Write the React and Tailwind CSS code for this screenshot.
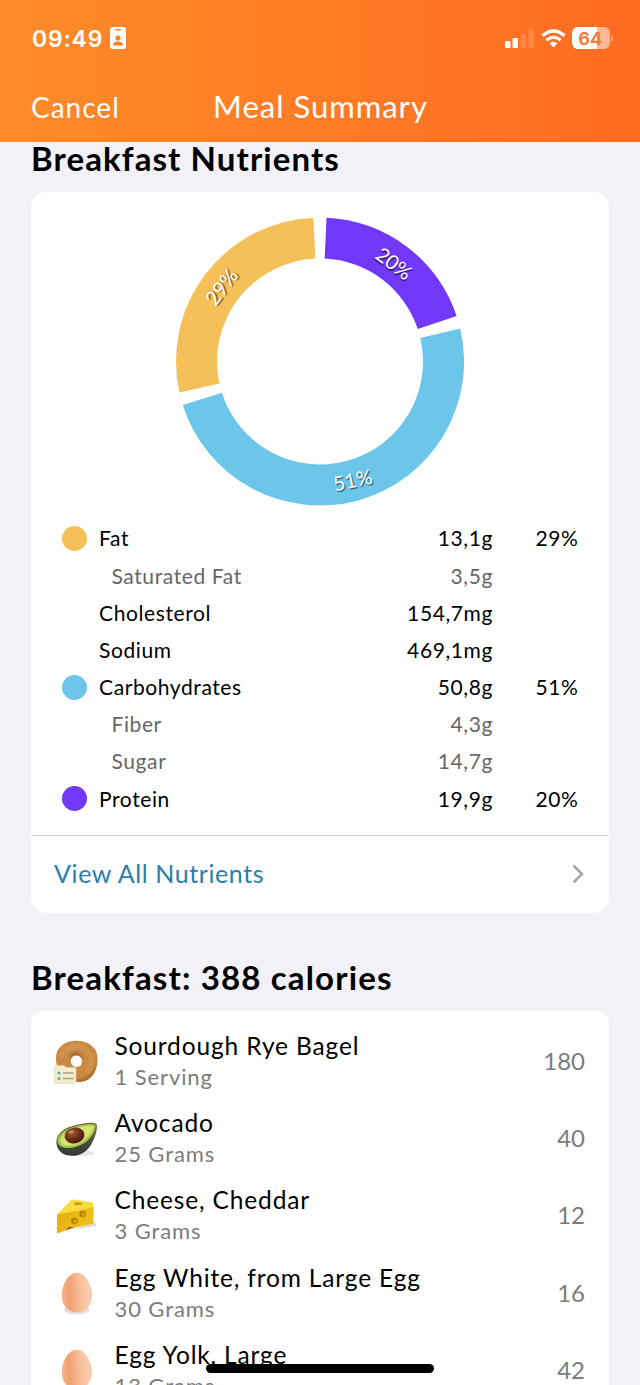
import React from "react";

const nutrients = [
  { name: "Fat", amount: "13,1g", percent: "29%", dot: "bg-[#f5c057]" },
  { name: "Saturated Fat", amount: "3,5g", sub: true },
  { name: "Cholesterol", amount: "154,7mg" },
  { name: "Sodium", amount: "469,1mg" },
  { name: "Carbohydrates", amount: "50,8g", percent: "51%", dot: "bg-[#6bc6ea]" },
  { name: "Fiber", amount: "4,3g", sub: true },
  { name: "Sugar", amount: "14,7g", sub: true },
  { name: "Protein", amount: "19,9g", percent: "20%", dot: "bg-[#7138f8]" },
];

// angles are degrees clockwise from the top
const slices = [
  { start: 2.6, end: 71.6, color: "#7138f8", label: "20%", x: 218.5, y: 71, rotate: 37 },
  { start: 76.8, end: 252.4, color: "#6bc6ea", label: "51%", x: 176.5, y: 287.5, rotate: -12 },
  { start: 257.6, end: 357.4, color: "#f5c057", label: "29%", x: 45, y: 94.5, rotate: -53 },
];

const point = (radius, angle) => {
  const a = ((angle - 90) * Math.PI) / 180;
  return `${(144 + radius * Math.cos(a)).toFixed(2)} ${(169.5 + radius * Math.sin(a)).toFixed(2)}`;
};

const slicePath = ({ start, end }) => {
  const large = end - start > 180 ? 1 : 0;
  return `M${point(144, start)} A144 144 0 ${large} 1 ${point(144, end)} L${point(103, end)} A103 103 0 ${large} 0 ${point(103, start)} Z`;
};

const DonutChart = () => (
  <svg className="mx-auto block" width="288" height="328" viewBox="0 0 288 328">
    {slices.map((slice) => (
      <path key={slice.label} d={slicePath(slice)} fill={slice.color} />
    ))}
    {slices.map((slice) => (
      <text
        key={slice.label}
        transform={`translate(${slice.x} ${slice.y}) rotate(${slice.rotate})`}
        textAnchor="middle"
        dominantBaseline="central"
        fill="#fff"
        className="text-[20px] [text-shadow:1px_1.5px_1px_rgba(0,0,0,0.55)]"
      >
        {slice.label}
      </text>
    ))}
  </svg>
);

const BagelIcon = () => (
  <svg width="44" height="44" viewBox="0 0 44 44">
    <defs>
      <radialGradient id="bagel" cx="0.48" cy="0.42" r="0.62">
        <stop offset="0.15" stopColor="#a8682f" />
        <stop offset="0.32" stopColor="#c98a45" />
        <stop offset="0.75" stopColor="#cb8a42" />
        <stop offset="1" stopColor="#a05d22" />
      </radialGradient>
    </defs>
    <path
      fillRule="evenodd"
      fill="url(#bagel)"
      d="M21 .8C31 .2 43 5 43.500 18C44 30 38 42.500 24 42C10 41.500 2 31 2 18C2 8 10 1.200 21 .8ZM22.500 15.500C18.500 15.500 16.500 18.500 16.800 21.500C17.200 25 19.500 27 23 27C26.500 27 28.300 24 28 20.500C27.700 17.500 25.500 15.500 22.500 15.500Z"
    />
    <path d="M8 14C12 7 21 5 29 7" fill="none" stroke="#dda460" strokeWidth="6" strokeLinecap="round" opacity="0.35" />
    <path d="M34 12C38.500 17 38 24 34 31" fill="none" stroke="#dda460" strokeWidth="5" strokeLinecap="round" opacity="0.3" />
    <path d="M.5 26.500Q.5 25.500 1.500 25.500H10L12 27.500H21Q22 27.500 22 28.500V42.500Q22 43.500 21 43.500H1.500Q.5 43.500 .5 42.500Z" fill="#f4eccb" stroke="#e0d5a8" strokeWidth="0.600" />
    <circle cx="5" cy="33" r="1.600" fill="#55b8a8" />
    <circle cx="5" cy="38.500" r="1.600" fill="#55b8a8" />
    <path d="M9 33H19.500M9 38.500H19.500" stroke="#a8a383" strokeWidth="1.300" />
  </svg>
);

const AvocadoIcon = () => (
  <svg width="44" height="44" viewBox="0 0 44 44">
    <defs>
      <radialGradient id="pit" cx="0.4" cy="0.3" r="0.7">
        <stop offset="0" stopColor="#a05a35" />
        <stop offset="0.6" stopColor="#6b2e18" />
        <stop offset="1" stopColor="#43190c" />
      </radialGradient>
      <linearGradient id="skin" x1="0" y1="0" x2="0" y2="1">
        <stop offset="0.3" stopColor="#5b6b2c" />
        <stop offset="0.65" stopColor="#44483a" />
        <stop offset="1" stopColor="#34362f" />
      </linearGradient>
    </defs>
    <ellipse cx="27" cy="36" rx="14" ry="3" fill="#dcdcdc" opacity="0.7" />
    <path d="M2.500 24C3 15 13 10 22 8C30 6.200 39 4.500 42.500 7C44 12 41 20 37.500 27C32 37.500 21 40.500 12 38C5 35.500 2 30 2.500 24Z" fill="url(#skin)" />
    <path d="M3.500 22.500C5 15.500 14 11 22 9.200C30 7.400 38 6 41.500 8C42 14 37 21 31 25.500C24 30.500 14 32.500 8 30C4.500 28.500 3 26 3.500 22.500Z" fill="#a9c94d" />
    <path d="M6.500 22.500C8 17 15 13 22 11.200C29 9.400 36 8 39.500 9.500C39 14.500 34 20 29 23.500C22 28 14 30 10 28C7 26.500 6 24.500 6.500 22.500Z" fill="#d9e279" />
    <ellipse cx="20.500" cy="18.500" rx="10" ry="7.800" transform="rotate(-10 20.500 18.500)" fill="url(#pit)" />
    <ellipse cx="17.500" cy="15" rx="3" ry="1.500" transform="rotate(-20 17.500 15)" fill="#d39a7a" opacity="0.7" />
  </svg>
);

const CheeseIcon = () => (
  <svg width="44" height="44" viewBox="0 0 44 44">
    <defs>
      <linearGradient id="rind" x1="0" y1="0" x2="1" y2="0.400">
        <stop offset="0" stopColor="#e6ad0b" />
        <stop offset="1" stopColor="#efc11c" />
      </linearGradient>
    </defs>
    <path d="M20 36L43 31.500L40 28L28 33Z" fill="#cfcfcf" opacity="0.8" />
    <path d="M3 20.500L16.500 6.800Q18 5.500 20 5.600L38.500 8.500L40 14.500L3 21Z" fill="#f8dc3f" />
    <path d="M3 20.500L39.500 13.500V29.500L20.500 34Q16 29.500 12.500 36L3.500 39.500Q2.800 39.700 2.800 38.500Z" fill="url(#rind)" />
    <ellipse cx="24" cy="9.700" rx="4" ry="1.400" fill="#c79716" />
    <circle cx="28.800" cy="20" r="3.300" fill="#b17a09" />
    <circle cx="29.500" cy="20.500" r="2.200" fill="#d69f12" />
    <circle cx="20.500" cy="27" r="3.300" fill="#b17a09" />
    <circle cx="21.200" cy="27.500" r="2.200" fill="#d69f12" />
    <path d="M12 37Q13 33 16 32.500Q19 32.500 20 34.500Q16 33.500 12 37Z" fill="#94630a" />
  </svg>
);

const EggIcon = () => (
  <svg width="44" height="44" viewBox="0 0 44 44">
    <defs>
      <linearGradient id="egg" x1="0" y1="0.55" x2="1" y2="0.45">
        <stop offset="0" stopColor="#f3b48c" />
        <stop offset="0.25" stopColor="#f0a070" />
        <stop offset="0.6" stopColor="#f8bd98" />
        <stop offset="0.9" stopColor="#fbceb2" />
        <stop offset="1" stopColor="#f4ba96" />
      </linearGradient>
    </defs>
    <ellipse cx="22.800" cy="38" rx="12.500" ry="4.500" fill="#e6dcd5" />
    <path d="M22.800 .8C31.500 .8 37.800 13 37.800 23.500C37.800 34 31.500 40 22.800 40C14 40 7.800 34 7.800 23.500C7.800 13 14 .8 22.800 .8Z" fill="url(#egg)" />
  </svg>
);

const foods = [
  { name: "Sourdough Rye Bagel", serving: "1 Serving", calories: 180, Icon: BagelIcon },
  { name: "Avocado", serving: "25 Grams", calories: 40, Icon: AvocadoIcon },
  { name: "Cheese, Cheddar", serving: "3 Grams", calories: 12, Icon: CheeseIcon },
  { name: "Egg White, from Large Egg", serving: "30 Grams", calories: 16, Icon: EggIcon },
  { name: "Egg Yolk, Large", serving: "13 Grams", calories: 42, Icon: EggIcon },
];

const StatusBar = () => (
  <div className="flex h-[76px] items-center pl-8 pr-[27px] text-white">
    <span className="pt-[2px] font-['Inter',sans-serif] text-[23px] font-semibold tracking-[0.800px]">09:49</span>
    <svg className="ml-[7px]" width="16" height="22" viewBox="0 0 16 22">
      <rect width="16" height="22" rx="2.500" fill="#fff" />
      <rect x="5" y="2" width="6" height="1.500" rx="0.700" fill="#fc8427" />
      <circle cx="8" cy="11" r="2.600" fill="#fc8427" />
      <path d="M3 18.500C3 15.500 5 14.500 8 14.500S13 15.500 13 18.500Z" fill="#fc8427" />
    </svg>
    <svg className="ml-auto" width="30" height="20" viewBox="0 0 30 20">
      <rect x="0" y="13" width="5.500" height="7" rx="1" fill="#fff" />
      <rect x="7.500" y="10" width="5.500" height="10" rx="1" fill="#fff" />
      <rect x="15.500" y="6" width="5.500" height="14" rx="1" fill="#fff" opacity="0.16" />
      <rect x="23.500" y="1.500" width="5.500" height="18.500" rx="1" fill="#fff" opacity="0.16" />
    </svg>
    <svg className="ml-[6px]" width="25" height="19" viewBox="0 0 25 19">
      <path d="M1.500 6.800Q12.500 -2.800 23.500 6.800" fill="none" stroke="#fff" strokeWidth="3.400" />
      <path d="M5.400 11.200Q12.500 5 19.600 11.200" fill="none" stroke="#fff" strokeWidth="3.200" />
      <path d="M12.500 18.500L8.500 14.300Q12.500 11 16.500 14.300Z" fill="#fff" />
    </svg>
    <div className="ml-[6.500px] flex h-[22px] w-[37.500px] items-center justify-center rounded-[6px] bg-linear-to-r from-white from-65% to-[#ffb792] to-65% pr-[1px] font-['Inter',sans-serif] text-[18px] font-bold text-[#ee7d3e]">
      64
    </div>
    <div className="ml-[1px] h-[7px] w-[2.500px] rounded-r-full bg-[#ffa170]" />
  </div>
);

const App = () => {
  return (
    <div className="relative h-[1385px] w-[640px] overflow-hidden bg-[#f2f1f8] font-['Lato',sans-serif] text-black">
      <header className="h-[142px] bg-linear-to-r from-[#fe8b28] to-[#fe6b22]">
        <StatusBar />
        <div className="grid h-[62px] grid-cols-[1fr_auto_1fr] items-center pl-[31px] pr-[30px] text-white">
          <button className="justify-self-start text-[28px] tracking-[1px]">Cancel</button>
          <h1 className="pb-[2px] text-[31px] tracking-[1px]">Meal Summary</h1>
        </div>
      </header>

      <main className="px-[31px]">
        <h2 className="h-[50px] text-[33px] leading-[33px] font-bold tracking-[1.100px]">Breakfast Nutrients</h2>

        <section className="h-[721px] rounded-[16px] bg-white">
          <DonutChart />
          <ul>
            {nutrients.map((item) => (
              <li
                key={item.name}
                className={`flex h-[37.200px] items-center pl-[31px] pr-[30.500px] text-[21px] tracking-[0.6px] ${item.sub ? "text-[#666]" : ""}`}
              >
                <span className={`size-[25px] rounded-full ${item.dot || ""}`} />
                <span className={`pb-[1px] ${item.sub ? "ml-[24.500px]" : "ml-3"}`}>{item.name}</span>
                <span className="ml-auto pb-[1px]">{item.amount}</span>
                <span className="w-[85.500px] pb-[1px] text-right">{item.percent}</span>
              </li>
            ))}
          </ul>
          <button className="mt-[17.400px] flex h-[78px] w-full items-center justify-between border-t border-[#d6d6d8] pl-[23px] pr-[25px] text-[25px] tracking-[0.6px] text-[#2a7eab]">
            <span className="pb-[2px]">View All Nutrients</span>
            <svg width="12" height="20" viewBox="0 0 12 20" fill="none" stroke="#a6a6a6" strokeWidth="2.600">
              <path d="M1.500 1.500L10 10L1.500 18.500" />
            </svg>
          </button>
        </section>

        <h2 className="mt-12 h-[50px] text-[33px] leading-[33px] font-bold tracking-[1.150px]">Breakfast: 388 calories</h2>

        <section className="rounded-t-[12px] bg-white pt-3">
          {foods.map(({ name, serving, calories, Icon }) => (
            <div key={name} className="flex h-[77.300px] items-center pl-[23px] pr-6">
              <Icon />
              <div className="ml-[16.500px] pb-[2px]">
                <p className="text-[24.500px] leading-[31px] tracking-[0.850px]">{name}</p>
                <p className="text-[22px] leading-[31px] tracking-[0.900px] text-[#7c7c7c]">{serving}</p>
              </div>
              <span className="ml-auto pb-[2px] text-[24px] text-[#7c7c7c]">{calories}</span>
            </div>
          ))}
        </section>
      </main>

      <div className="absolute top-[1364px] left-[206px] h-[9px] w-[228px] rounded-full bg-black" />
    </div>
  );
};

export default App;
